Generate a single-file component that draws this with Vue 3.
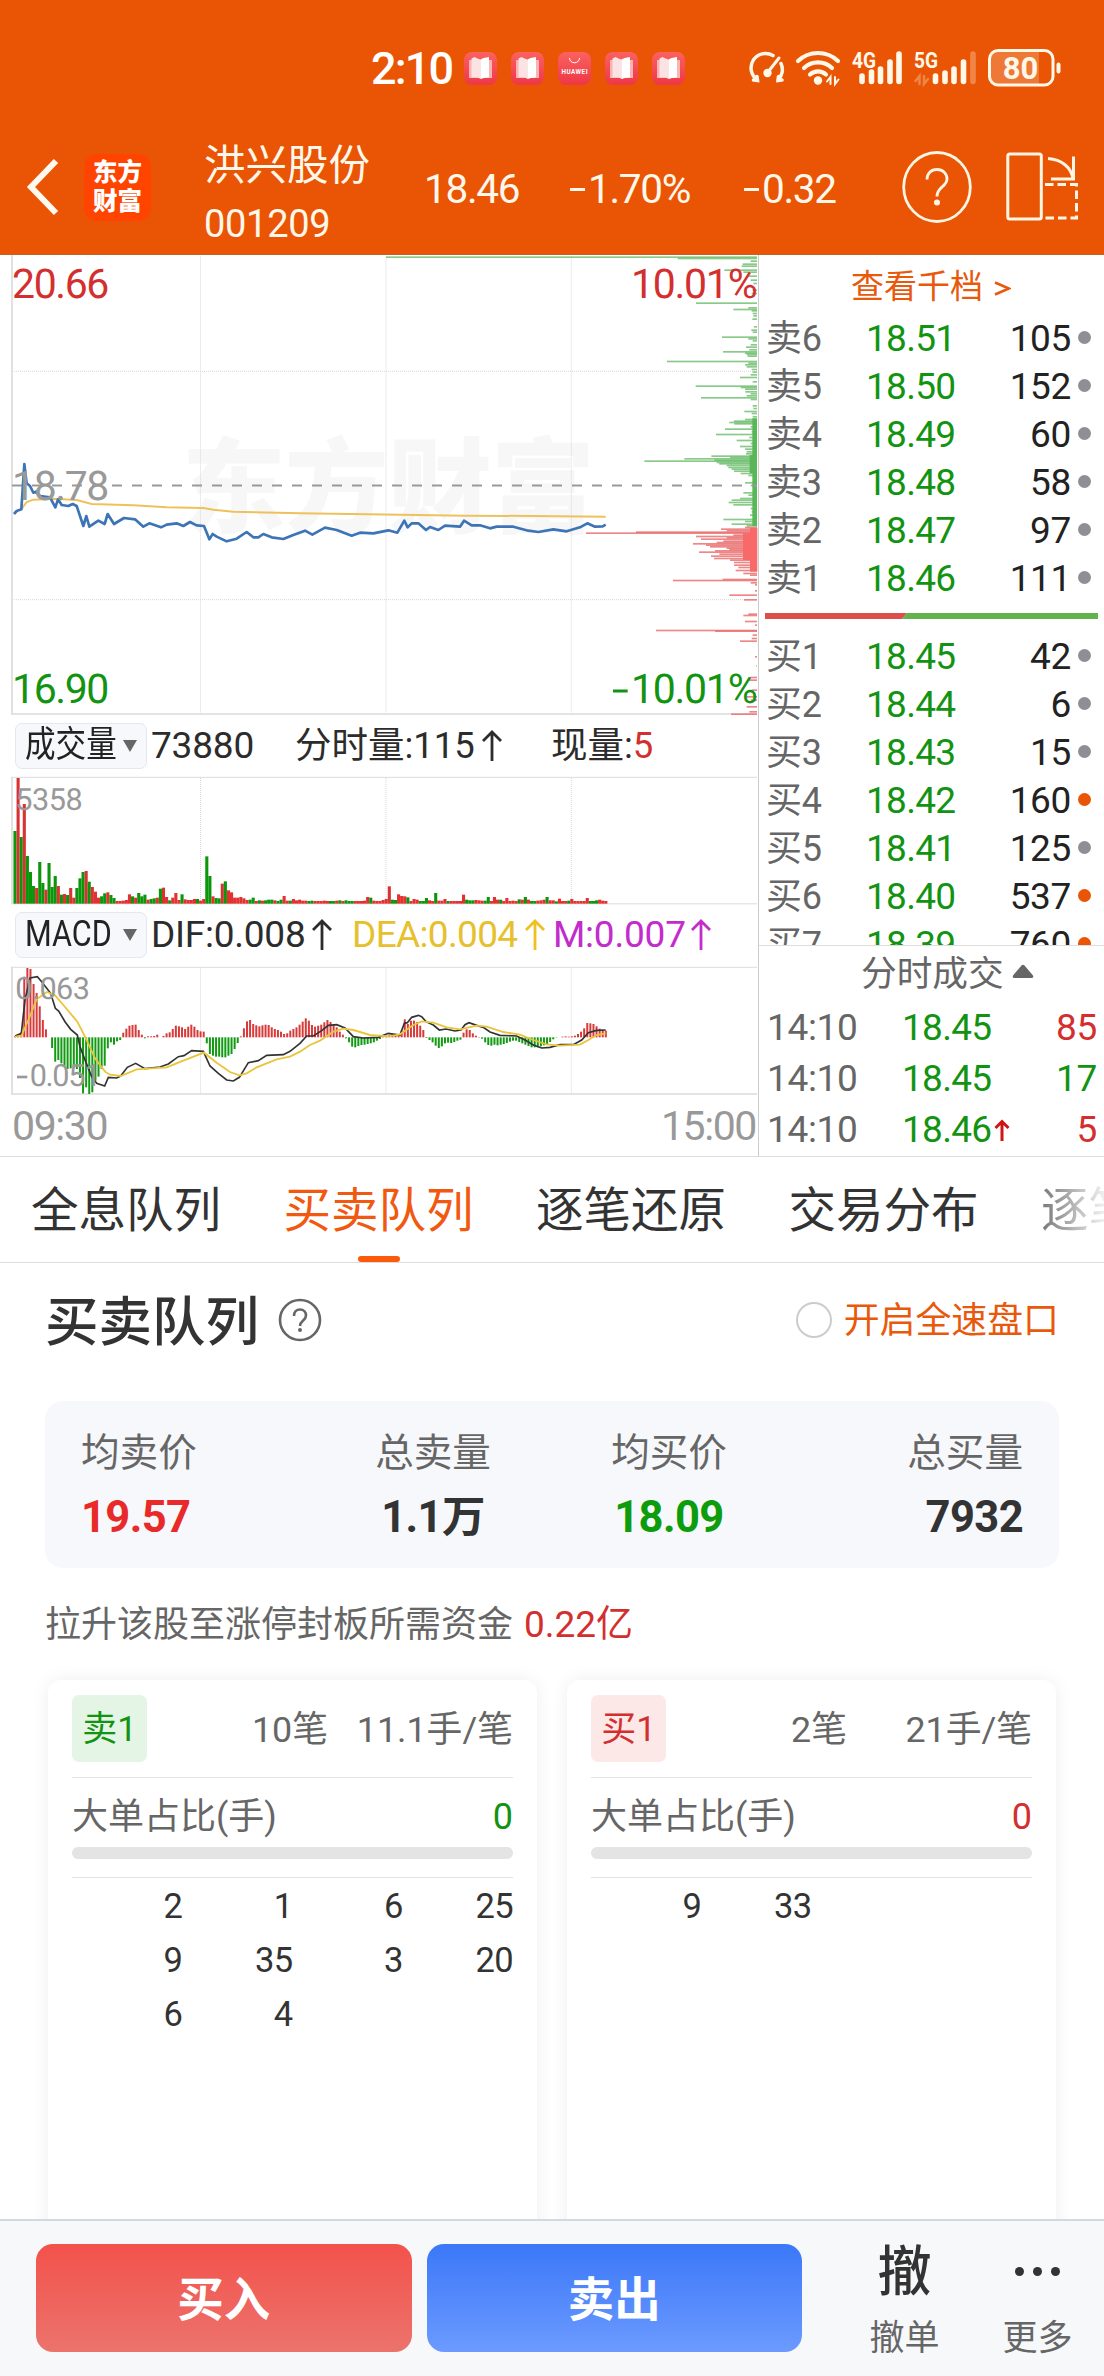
<script setup>
const series = (s) => s.trim().split(/\s+/)

const statusApps = ['book', 'book', 'huawei', 'book', 'book']

// Chart geometry is expressed in third-of-a-pixel units.
const PITCH = 9.28
const FIRST = 45

const priceLine = '42,792 50,783 64,778 73,642 80,700 90,708 100,728 108,725 120,738 150,742 166,772 174,748 185,765 205,768 218,762 230,768 250,828 259,798 268,830 295,812 314,822 323,792 342,822 372,804 405,808 430,830 448,820 483,832 500,824 530,820 550,828 570,816 590,826 612,828 628,868 638,852 650,860 680,874 710,866 740,846 760,862 775,862 790,852 815,862 850,867 880,855 915,842 937,854 975,833 1010,840 1055,857 1080,848 1120,850 1165,841 1192,848 1213,812 1223,832 1235,820 1255,820 1278,840 1290,831 1315,840 1335,827 1380,830 1392,812 1415,826 1440,826 1470,835 1490,830 1540,830 1585,842 1615,846 1660,838 1700,844 1740,832 1762,820 1785,830 1808,829 1817,824'
const averageLine = '64,778 80,756 100,749 160,746 230,750 275,762 400,766 500,772 610,774 640,779 700,785 900,790 1200,794 1400,797 1600,798 1817,800'

const depth = (s) => series(s).map((p) => {
  const [y, left] = p.split(':').map(Number)
  return { y: y - 2, x: 1140 + left, w: 1131 - left }
})
const askDepth = depth(`21:18 25:893 33:1112 42:1088 48:1085 60:1033 66:1090 78:1105 90:1112 100:1120 120:1118 130:1115 159:948 173:1105 178:1060 182:1115
190:1118 197:1120 207:1117 230:1122 240:1114 246:1118 261:1026 266:1105 272:1118 284:1112 291:1098 299:1108 305:1029 309:1095 313:1100 318:1103
334:861 339:1105 344:1095 350:1100 358:1115 366:1118 374:1112 382:1080 395:1118 408:947 412:1082 417:1095 425:1096 431:1112 437:1100 443:963 448:1112
467:1118 475:1120 484:1093 490:1115 500:1118 508:1095 513:1062 517:1048 521:1063 530:1112 537:1035 545:1115 553:1008 562:1108 571:1070 580:1112
589:1080 597:1095 605:1100 611:1098 618:994 622:1050 626:913 630:1003 633:793 637:1010 641:1018 646:1040 652:1045 657:1055 663:1062 670:1082 676:1105
698:1095 706:1112 715:1120 728:1090 735:1105 745:1080 750:1055 757:1046 764:1060 775:1112 785:1115 795:1110 808:1030 814:1095 822:1055 827:1100`)
const bidDepth = depth(`832:1095 837:1023 842:1040 846:768 849:618 855:1060 859:948 863:1040 867:963 873:1030 877:1010 881:939 885:978 890:990 894:1040 898:1048
902:1005 906:957 912:1018 918:993 925:1002 930:1050 937:1062 945:1062 952:1075 961:1067 970:1090 975:1110 988:1028 991:879 998:1112 1004:1125
1022:1125 1035:1048 1049:1092 1096:1090 1092:1105 1114:1095 1125:1125 1141:828 1143:1005 1155:1118 1165:1115 1173:1080 1220:1125 1247:1129
1282:1110 1290:1108 1320:1115 1340:1100 1350:1112 1370:1100 1385:1108 1392:1053`)

const volumes = series(`g218 r377 g200 r299 g143 g95 g53 r47 g125 g62 r42 g122 g50 g83 r53 g27 r29 g26 r47 r18 g47 g76 g95 r98 g66 r50 r36 r18 g22 g31
r34 g26 g17 r8 r8 r9 r11 r28 g22 r18 g32 g22 g27 r12 g14 g16 r18 g45 r48 r20 g10 r18 r32 r11 g28 r13 r11 r11 r14 g14
r9 r14 g142 g83 r22 g17 g16 r60 g67 r40 r34 r18 r18 r20 r16 r11 g12 g18 r8 g10 r9 g10 g12 g12 r10 g8 g12 r23 r9 g9
r14 r10 r12 r9 r9 g8 g9 r8 r8 r8 r9 r8 g8 g8 r9 g10 r8 g10 g8 g8 r8 r8 r8 r9 r20 g18 r9 r8 r8 r11
r14 r52 g12 g11 r28 r23 r22 g19 r8 r14 r12 g8 g8 g17 r10 r8 g32 r9 r9 r14 g8 r8 r8 r8 r8 r27 g12 g10 g10 r11
r10 r9 g9 g20 r8 r20 r12 g12 r8 r17 r8 r9 r8 g13 r12 g20 r12 g8 g8 r9 r10 r12 g20 r10 r10 g7 r15 r8 r8 g9
r14 r8 r8 r8 r8 r17 g8 g8 g10 r12 r9 r8`).map((v, i) => ({ up: v[0] === 'r', h: +v.slice(1), x: FIRST + i * PITCH }))

const macd = series(`3 5 15 182 208 205 160 133 93 52 24 0 -32 -73 -68 -78 -85 -95 -93 -92 -95 -122 -168 -150 -170 -165 -130 -118 -95 -85
-33 -15 -22 -12 -8 14 26 35 37 38 22 8 -3 3 3 4 8 0 4 12 15 25 35 33 30 25 32 38 32 22
18 17 -18 -50 -55 -58 -58 -60 -60 -55 -50 -35 -17 3 27 48 52 40 36 33 36 38 37 30 25 22 17 10 12 20
25 30 38 47 57 50 37 32 35 38 45 52 46 38 30 17 8 -3 -15 -28 -30 -26 -23 -22 -20 -18 -15 -10 -5 2
5 8 10 6 5 20 54 40 50 50 46 35 22 -2 -8 -15 -25 -32 -27 -18 -16 -17 -14 -10 -7 14 24 22 12 5
-1 -4 -15 -23 -25 -22 -24 -22 -20 -17 -13 -10 -10 -14 -18 -22 -26 -30 -30 -30 -27 -24 -20 -14 -6 -1 0 2 3 2
3 5 10 17 27 43 42 40 33 26 22 20`).map((v, i) => ({ v: +v, x: FIRST + i * PITCH }))
const difLine = '45,978 64,970 75,870 90,804 112,800 125,815 152,850 166,895 176,903 195,935 212,958 232,975 240,1010 255,1050 275,1100 290,1120 314,1128 325,1102 350,1104 362,1098 382,1072 407,1060 435,1076 480,1071 505,1062 535,1040 552,1037 575,1022 610,1024 630,1068 655,1090 680,1110 700,1113 718,1102 745,1058 775,1052 800,1036 850,1034 870,1024 900,1000 920,978 940,978 965,962 985,946 1010,944 1035,954 1060,980 1090,984 1135,982 1165,970 1200,975 1213,940 1222,938 1235,922 1255,916 1265,920 1278,935 1300,945 1318,960 1338,957 1365,963 1383,960 1395,944 1407,938 1430,946 1450,952 1470,966 1500,976 1550,978 1575,990 1600,1005 1625,1014 1650,1012 1680,1004 1720,1004 1745,990 1765,968 1790,961 1817,960'
const deaLine = '45,980 64,978 85,930 110,868 140,846 165,856 190,885 232,935 255,980 285,1045 315,1085 330,1094 362,1098 410,1078 500,1072 550,1052 612,1028 650,1058 690,1086 718,1096 740,1090 770,1072 830,1048 870,1040 900,1025 930,1005 960,992 1000,965 1030,956 1060,960 1110,975 1165,979 1200,973 1240,945 1265,934 1300,938 1340,952 1380,958 1430,947 1460,950 1510,966 1560,974 1600,990 1640,1003 1680,1007 1740,1004 1765,990 1790,975 1817,970'

const asks = [['卖6', '18.51', 105], ['卖5', '18.50', 152], ['卖4', '18.49', 60], ['卖3', '18.48', 58], ['卖2', '18.47', 97], ['卖1', '18.46', 111]]
const bids = [['买1', '18.45', 42], ['买2', '18.44', 6], ['买3', '18.43', 15], ['买4', '18.42', 160, true], ['买5', '18.41', 125], ['买6', '18.40', 537, true], ['买7', '18.39', 760, true]]
const trades = [
  { price: '18.45', qty: 85, up: true },
  { price: '18.45', qty: 17, up: false },
  { price: '18.46', qty: 5, up: true, arrow: true },
]
const tabs = ['全息队列', '买卖队列', '逐笔还原', '交易分布', '逐笔成交']
const stats = [
  { label: '均卖价', value: '19.57', tone: 'red' },
  { label: '总卖量', value: '1.1万', tone: '' },
  { label: '均买价', value: '18.09', tone: 'green' },
  { label: '总买量', value: '7932', tone: '' },
]
const queues = [
  { name: '卖1', tone: 'green', count: '10笔', avg: '11.1手/笔', items: [2, 1, 6, 25, 9, 35, 3, 20, 6, 4] },
  { name: '买1', tone: 'red', count: '2笔', avg: '21手/笔', items: [9, 33] },
]
</script>

<template>
  <div class="screen">
    <header class="top">
      <div class="status">
        <span class="clock">2:10</span>
        <div class="apps">
          <svg v-for="(a, i) in statusApps" :key="i" width="33" height="33" viewBox="0 0 33 33">
            <defs>
              <linearGradient :id="'app' + i" x1="0" y1="0" x2="0" y2="1">
                <stop offset="0" stop-color="#fb6260" /><stop offset="1" stop-color="#ee3745" />
              </linearGradient>
            </defs>
            <rect width="33" height="33" rx="8" :fill="`url(#app${i})`" />
            <template v-if="a === 'book'">
              <path d="M5 8h23v18H18l-1.500 1-1.500-1H5z" fill="#fbb3b5" />
              <path d="M7.500 6.500l3-1.500 3 1.500 3 1v19l-3-1h-6z" fill="#fbe3e4" />
              <path d="M16.500 7.500l3-1.500 5.500-1v20.500l-5 .5-3.500 1z" fill="#fff" />
            </template>
            <template v-else>
              <path d="M11.500 6a5 4.800 0 0 0 10 0" fill="none" stroke="#fff" stroke-width="1" />
              <text x="16.500" y="21.500" font-size="6.300" font-weight="700" fill="#fff" text-anchor="middle" textLength="26">HUAWEI</text>
            </template>
          </svg>
        </div>
        <svg class="signals" width="318" height="40" viewBox="746 48 318 40" fill="none" stroke="#fff8e8" stroke-linecap="round">
          <path d="M756.500 80a14.500 14.500 0 0 1 15.500-24.500M780 63.500a14.500 14.500 0 0 1-3 16.500M752.500 80l4 .5-.5-4M781 80l-4 .5.5-4" stroke-width="3.500" />
          <path d="M767 72L778 58" stroke-width="3" />
          <circle cx="766.500" cy="73" r="4.200" fill="#fff8e8" stroke="none" />
          <path d="M797 61a29 29 0 0 1 40 0M803 68a20.500 20.500 0 0 1 28 0M809 74.500a12 12 0 0 1 16 0" stroke-width="4.200" />
          <circle cx="817" cy="80.500" r="4.200" fill="#fff8e8" stroke="none" />
          <path d="M829.500 84v-7l-3.500 4.500M834 77v7l3.500-4.500" stroke-width="2" />
          <text x="851" y="68" class="net" textLength="24" lengthAdjust="spacingAndGlyphs">4G</text>
          <path d="M861 76v5.500M870.500 72v9.500M879.500 69v12.500M889 62v19.500M898 54v27.500" stroke-width="5.600" />
          <text x="913" y="68" class="net" textLength="24" lengthAdjust="spacingAndGlyphs">5G</text>
          <path d="M918.500 84v-8l-4 5M923 76v8l4-5" stroke-width="2.500" opacity=".3" />
          <path d="M934.500 76v5.500M944 73v8.500M953 69v12.500M962.500 62v19.500" stroke-width="5.600" />
          <path d="M972 54v27.500" stroke-width="5.600" opacity=".3" />
          <path d="M996 52h42v32h-42q-6 0-6-7V59q0-7 6-7z" fill="#fff8e8" opacity=".22" stroke="none" />
          <rect x="988.500" y="50.500" width="63.500" height="34.500" rx="8.500" stroke-width="3" />
          <path d="M1057.500 64.500v7" stroke-width="4" />
          <text x="1019.500" y="79" class="level" text-anchor="middle">80</text>
        </svg>
      </div>

      <div class="quote">
        <svg class="back" width="34" height="60" viewBox="0 0 34 60"><path d="M30 4L5 30l25 26" fill="none" stroke="#fffaf0" stroke-width="6" /></svg>
        <div class="logo"><span>东方</span><span>财富</span></div>
        <div class="stock">
          <div class="stock-name">洪兴股份</div>
          <div class="stock-code">001209</div>
        </div>
        <div class="figure last">18.46</div>
        <div class="figure pct"><i class="minus"></i>1.70%</div>
        <div class="figure diff"><i class="minus"></i>0.32</div>
        <svg class="help" width="70" height="72" viewBox="0 0 70 72" fill="none" stroke="#fff5e4" stroke-width="2.800">
          <ellipse cx="35" cy="36" rx="33.300" ry="34.500" />
          <path d="M25 28.500c0-6 4-10 10-10s10 4 10 9.500c0 8-10 7.500-10 17.500" />
          <circle cx="35" cy="51.500" r="3" fill="#fff5e4" stroke="none" />
        </svg>
        <svg class="rotate" width="74" height="70" viewBox="0 0 74 70" fill="none" stroke="#fff5e4" stroke-width="3">
          <rect x="1.800" y="2" width="33.500" height="65" rx="2" />
          <path d="M42 6.500c14 1 23 9 25 20M67.500 4.500v22.500H45" />
          <path d="M39 32.500h31.500V66H39" stroke-dasharray="8.500 4" />
        </svg>
      </div>
    </header>

    <section class="market">
      <div class="charts">
        <svg class="chart price" width="759" height="465" viewBox="0 15 2277 1395">
          <text class="mark" x="545" y="825" textLength="1240">东方财富</text>
          <g class="grid">
            <path d="M36 364H2271M36 1049H2271M601.500 20V1390M1158 20V1390M1714 20V1390" />
          </g>
          <path d="M36 15V1392M33 1392H2271" class="frame" />
          <rect v-for="(d, i) in askDepth" :key="'a' + i" :x="d.x" :y="d.y" :width="d.w" height="5" class="ask" />
          <rect v-for="(d, i) in bidDepth" :key="'b' + i" :x="d.x" :y="d.y" :width="d.w" height="5" class="bid" />
          <path d="M2264 505V828M2256 615V670" stroke="#58b858" stroke-width="14" />
          <path d="M2261 834V965M2240 850V930" stroke="#f86a6a" stroke-width="22" />
          <path d="M36 706.500H2271" stroke="#999" stroke-width="6" stroke-dasharray="30 30" />
          <polyline :points="averageLine" fill="none" stroke="#efc15c" stroke-width="6" />
          <polyline :points="priceLine" fill="none" stroke="#3d74b5" stroke-width="8" stroke-linejoin="round" />
          <text x="36" y="145" class="scale red" textLength="292">20.66</text>
          <text x="36" y="750" class="scale gray" textLength="292">18.78</text>
          <text x="36" y="1360" class="scale green" textLength="292">16.90</text>
          <text x="2273" y="145" class="scale red" text-anchor="end" textLength="380">10.01%</text>
          <text x="2273" y="1360" class="scale green" text-anchor="end" textLength="380">10.01%</text>
          <path d="M1839 1323h44" stroke="#129312" stroke-width="9" />
        </svg>

        <div class="legend">
          <button class="pick"><span>成交量</span><i></i></button>
          <span class="vol-total">73880</span>
          <span class="vol-minute">分时量:115</span>
          <svg class="arrow" width="20" height="31" viewBox="0 0 20 31"><path d="M10 31V2M1 11l9-9 9 9" /></svg>
          <span class="vol-now">现量:<b>5</b></span>
        </div>
        <svg class="chart" width="759" height="133" viewBox="0 195 2277 399">
          <path class="grid" d="M601.500 204V580M1158 204V580M1714 204V580" />
          <path d="M36 202V583" class="frame" />
          <path d="M33 202H2271M36 581.500H2271" class="frame thin" />
          <rect v-for="(v, i) in volumes" :key="i" :x="v.x - 4.600" :y="581 - v.h" width="9.300" :height="v.h" :fill="v.up ? (v.h > 40 ? '#d93232' : '#e33030') : '#0c960c'" />
          <text x="46" y="300" class="mini" textLength="202">5358</text>
        </svg>

        <div class="legend second">
          <button class="pick"><span>MACD</span><i></i></button>
          <span class="dif">DIF:0.008</span>
          <svg class="arrow a1" width="20" height="31" viewBox="0 0 20 31"><path d="M10 31V2M1 11l9-9 9 9" /></svg>
          <span class="dea">DEA:0.004</span>
          <svg class="arrow a2" width="20" height="31" viewBox="0 0 20 31"><path d="M10 31V2M1 11l9-9 9 9" /></svg>
          <span class="mm">M:0.007</span>
          <svg class="arrow a3" width="20" height="31" viewBox="0 0 20 31"><path d="M10 31V2M1 11l9-9 9 9" /></svg>
        </div>
        <svg class="chart" width="759" height="133" viewBox="0 765 2277 399">
          <path class="grid" d="M601.500 775V1150M1158 775V1150M1714 775V1150" />
          <path d="M36 770V1154M33 1152H2271" class="frame" />
          <path d="M33 772H2271" class="frame thin" />
          <rect v-for="(m, i) in macd" :key="i" :x="m.x - 3" :y="m.v > 0 ? 982 - m.v : 982" width="6" :height="Math.abs(m.v)" :fill="m.v > 0 ? '#d83a3a' : '#129a12'" />
          <polyline :points="difLine" fill="none" stroke="#333" stroke-width="5" />
          <polyline :points="deaLine" fill="none" stroke="#e9c53c" stroke-width="5.500" />
          <text x="46" y="868" class="mini" textLength="224">0.063</text>
          <text x="89" y="1127" class="mini" textLength="215">0.051</text>
          <path d="M51 1101h31" stroke="#999" stroke-width="8" />
        </svg>
        <div class="axis"><span>09:30</span><span>15:00</span></div>
      </div>

      <aside class="book">
        <div class="more-levels">查看千档 <svg width="17" height="15" viewBox="0 0 17 15"><path d="M1 1.500l14 6-14 6" fill="none" stroke="#e8590c" stroke-width="2.600" /></svg></div>
        <div class="levels asks">
          <div v-for="r in asks" :key="r[0]" class="level-row">
            <span class="side">{{ r[0] }}</span><span class="px">{{ r[1] }}</span><span class="qty">{{ r[2] }}</span><i class="dot"></i>
          </div>
        </div>
        <svg class="ratio" width="333" height="6" viewBox="0 0 333 6"><path d="M0 0h142l-5 6H0z" fill="#dc4e4c" /><path d="M142 0h191v6H137z" fill="#62b34e" /></svg>
        <div class="levels bids">
          <div v-for="r in bids" :key="r[0]" class="level-row">
            <span class="side">{{ r[0] }}</span><span class="px">{{ r[1] }}</span><span class="qty">{{ r[2] }}</span><i class="dot" :class="{ hot: r[3] }"></i>
          </div>
        </div>
        <div class="trade-head">分时成交<svg width="22" height="15" viewBox="0 0 22 15"><path d="M9.500 1.500q1.500-1.500 3 0L21 11.500q1 2.500-1.500 2.500h-17Q0 14 1 11.500z" fill="#666" /></svg></div>
        <div v-for="(t, i) in trades" :key="i" class="trade">
          <span class="time">14:10</span><span class="px">{{ t.price }}</span>
          <span class="tick"><svg v-if="t.arrow" width="16" height="23" viewBox="0 0 16 23"><path d="M8 22V3M1.500 9L8 2.500 14.500 9" fill="none" stroke="#d01414" stroke-width="3" /></svg></span>
          <span class="qty" :class="t.up ? 'red' : 'green'">{{ t.qty }}</span>
        </div>
      </aside>
    </section>

    <nav class="tabs">
      <span v-for="(t, i) in tabs" :key="i" class="tab" :class="{ active: i === 1 }">{{ t }}</span>
    </nav>

    <main class="panel">
      <div class="panel-head">
        <h2>买卖队列</h2>
        <svg width="44" height="44" viewBox="0 0 44 44" fill="none" stroke="#666" stroke-width="2.600">
          <circle cx="22" cy="22" r="20" />
          <path d="M16 18c0-4 2.500-6.500 6-6.500s6 2.500 6 6c0 5-6 5-6 10.500" /><circle cx="22" cy="32" r="2" fill="#666" stroke="none" />
        </svg>
        <span class="radio"></span>
        <span class="turbo">开启全速盘口</span>
      </div>

      <div class="stats">
        <div v-for="s in stats" :key="s.label" class="stat">
          <div class="stat-label">{{ s.label }}</div>
          <div class="stat-value" :class="s.tone">{{ s.value }}</div>
        </div>
      </div>

      <p class="funds">拉升该股至涨停封板所需资金 <em>0.22亿</em></p>

      <div class="cards">
        <article v-for="q in queues" :key="q.name" class="card">
          <div class="card-head">
            <span class="badge" :class="q.tone">{{ q.name }}</span>
            <span class="count">{{ q.count }}</span>
            <span class="avg">{{ q.avg }}</span>
          </div>
          <div class="big">
            <div class="big-row"><span>大单占比(手)</span><span :class="q.tone">0</span></div>
            <div class="track"></div>
          </div>
          <div class="items"><span v-for="(n, i) in q.items" :key="i">{{ n }}</span></div>
        </article>
      </div>
    </main>

    <footer class="actions">
      <button class="buy">买入</button>
      <button class="sell">卖出</button>
      <div class="tool cancel"><span class="glyph">撤</span><span>撤单</span></div>
      <div class="tool"><span class="glyph dots"><i></i><i></i><i></i></span><span>更多</span></div>
    </footer>
  </div>
</template>

<style>
body { margin: 0; background: #fff; }
</style>

<style scoped>
* { box-sizing: border-box; }
.screen {
  width: 1104px; height: 2376px; overflow: hidden; display: flex; flex-direction: column; line-height: 1.2;
  background: #fff; color: #333; font-family: Roboto, "Noto Sans CJK SC", sans-serif; white-space: nowrap;
}
button { border: 0; padding: 0; font-family: inherit; }
svg { display: block; flex: none; }
.red { color: #d32f2f; fill: #d32f2f; }
.green { color: #129312; fill: #129312; }
.gray { fill: #999; }

.top { height: 255px; background: #e95504; color: #fff8ea; flex: none; border-bottom: 1px solid #c4602a; }
.status { height: 118px; padding: 50px 0 0 371px; display: flex; align-items: flex-start; }
.clock { width: 93px; font-size: 45px; font-weight: 500; line-height: 37px; letter-spacing: -1.8px; color: #fff; }
.apps { display: flex; gap: 14px; padding-top: 2px; }
.signals { margin: -2px 0 0 62px; }
.net { font-size: 22px; font-weight: 700; fill: #fff8e8; stroke: none; }
.level { font-size: 31px; font-weight: 700; fill: #fff8e8; stroke: none; }

.quote { display: flex; align-items: center; height: 138px; padding-left: 26px; }
.logo {
  width: 67px; height: 67px; margin-left: 24px; border-radius: 13px; background: #ff4400; color: #fff;
  display: flex; flex-direction: column; align-items: center; justify-content: center;
  font-size: 24.500px; line-height: 29px; font-weight: 900;
}
.stock { width: 220px; margin-left: 53px; padding-top: 17px; }
.stock-name { font-size: 41.500px; line-height: 56px; }
.stock-code { font-size: 38px; line-height: 60px; letter-spacing: -.3px; }
.figure { font-size: 40.500px; letter-spacing: -1.300px; line-height: 50px; padding-top: 4px; display: flex; align-items: center; }
.last { width: 146px; }
.pct { width: 174px; }
.diff { width: 158px; }
.minus { width: 15px; height: 3px; margin-right: 3px; background: currentColor; }
.rotate { margin-left: 34px; }

.market { display: flex; height: 902px; flex: none; border-bottom: 1px solid #ddd; }
.charts { width: 759px; border-right: 1px solid #ccc; overflow: hidden; }
.chart { text-rendering: geometricPrecision; }
.mark { font-size: 312px; font-weight: 900; fill: #f7f7f8; }
.grid { fill: none; stroke: #d8d8d8; stroke-width: 3; stroke-dasharray: 3 3; }
.frame { fill: none; stroke: #dcdcdc; stroke-width: 5; }
.frame.thin { stroke-width: 3; }
.ask { fill: #62b862; opacity: .75; }
.bid { fill: #ea6a6a; opacity: .8; }
.scale { font-size: 123px; }
.mini { font-size: 92px; fill: #999; }
.legend { height: 55px; padding: 0 0 0 15px; display: flex; align-items: center; font-size: 37px; color: #2c2c2c; line-height: 46px; }
.legend.second { height: 57px; }
.pick {
  position: relative; width: 132px; height: 46px; margin-top: -4px; padding-left: 9px; border: 1px solid #e4e7ee; border-radius: 7px;
  background: #f6f8fb; display: flex; align-items: center; font-size: 36px; line-height: 44px; color: #222; flex: none;
}
.legend .pick span { margin-top: -1px; width: 98px; flex: none; text-align: left; transform: scaleX(.85); transform-origin: left center; }
.pick i { border: 7.500px solid transparent; border-top: 12px solid #666; border-bottom: 0; }
.legend span, .legend .arrow { margin-top: -4px; }
.arrow { fill: none; stroke: #2c2c2c; stroke-width: 2.800; }
.vol-total { width: 144px; margin-left: 4px; letter-spacing: -.2px; }
.vol-minute { width: 184px; font-size: 36.500px; }
.legend .vol-minute + .arrow { margin-left: 3px; }
.vol-now { margin-left: 49px; font-size: 36.500px; }
.vol-now b { font-weight: 400; color: #d32f2f; }
.dif { width: 161px; margin-left: 4px; letter-spacing: -.25px; }
.dea { width: 173px; margin-left: 20px; color: #e6c02e; letter-spacing: -.65px; }
.a2 { stroke: #f0c020; }
.mm { width: 138px; margin-left: 8px; color: #c22ccb; letter-spacing: -.2px; }
.a3 { stroke: #c22ccb; }
.axis { display: flex; justify-content: space-between; padding: 3px 2px 0 12px; font-size: 41px; line-height: 50px; color: #999; letter-spacing: -1.4px; }

.book { flex: 1; display: flex; flex-direction: column; font-size: 37px; }
.more-levels { height: 60px; padding-top: 4px; display: flex; align-items: center; padding-left: 92px; font-size: 33px; color: #e8590c; flex: none; }
.more-levels svg { margin: 2px 0 0 11px; }
.asks { height: 298px; flex: none; }
.level-row { display: flex; align-items: center; height: 48px; padding-left: 7px; letter-spacing: -.35px; }
.bids { height: 313px; margin-top: 14px; overflow: hidden; border-bottom: 1px solid #ddd; flex: none; }
.side { width: 100px; font-size: 36px; color: #666; padding-top: 2px; }
.px { width: 92px; color: #129312; letter-spacing: -.7px; }
.qty { width: 113px; text-align: right; color: #222; }
.dot { width: 13px; height: 13px; margin: -3px 0 0 7px; border-radius: 50%; background: #8f8e94; }
.dot.hot { background: #e95504; }
.ratio { margin-left: 6px; }
.trade-head { height: 57px; display: flex; align-items: center; padding-left: 102px; font-size: 35.700px; color: #666; flex: none; }
.trade-head svg { margin: -6px 0 0 8px; }
.trade { height: 51px; display: flex; align-items: center; padding-left: 8px; letter-spacing: -.35px; flex: none; }
.time { width: 135px; color: #666; }
.tick { width: 20px; }
.trade .qty { width: 83px; }
.trade .qty.red { color: #d32f2f; }
.trade .qty.green { color: #129312; }

.tabs {
  height: 106px; flex: none; padding-left: 31px; display: flex; gap: 62.500px; border-bottom: 1px solid #ddd; font-size: 47.500px; line-height: 108px;
  overflow: hidden;
}
.tab { position: relative; flex: none; height: 105px; }
.tab:last-child { background: linear-gradient(90deg, #777 0, #eee 62px); -webkit-background-clip: text; background-clip: text; color: transparent; }
.tab.active { color: #f0590f; }
.tab.active::after { content: ""; position: absolute; left: 74px; bottom: 0; width: 42px; height: 6px; border-radius: 3px; background: #fb5a0c; }

.panel { height: 956px; flex: none; overflow: hidden; }
.panel-head { height: 138px; padding: 0 45px 24px 45px; display: flex; align-items: center; }
h2 { margin: 0; width: 233px; padding-top: 5px; font-size: 53.500px; font-weight: 500; line-height: 60px; }
.radio { width: 36px; height: 36px; margin-left: 474px; border: 2px solid #ccc; border-radius: 50%; }
.turbo { margin-left: 12px; padding-top: 4px; font-size: 35.900px; color: #e8590c; }
.stats { height: 167px; margin: 0 45px; padding: 29px 36px 0; border-radius: 18px; background: #f7f8fb; display: flex; justify-content: space-between; }
.stat { text-align: center; width: 116px; }
.stat:nth-child(2) { margin-left: 58px; }
.stat:first-child { text-align: left; }
.stat:last-child { text-align: right; margin-left: 60px; }
.stat-label { font-size: 38.600px; line-height: 46px; color: #666; }
.stat-value { margin-top: 19px; font-size: 43.500px; line-height: 46px; font-weight: 700; letter-spacing: -.6px; }
.stat-value.red { color: #e92a2a; }
.stat-value.green { color: #0c9c0c; }
.funds { margin: 36px 0 0 45px; font-size: 36px; line-height: 42px; color: #666; }
.funds em { margin-left: 2px; font-style: normal; font-size: 37px; color: #d32f2f; }
.cards { display: flex; gap: 30px; padding: 34px 48px 0; }
.card { width: 489px; height: 600px; padding: 15px 24px 0; border-radius: 13px; background: #fff; box-shadow: 0 0 18px rgba(0, 0, 0, .07); }
.card-head { height: 83px; border-bottom: 1px solid #e2e2e2; display: flex; font-size: 35.800px; line-height: 70px; color: #666; }
.badge { width: 75px; height: 67px; border-radius: 7px; text-align: center; font-size: 35px; }
.badge.green { background: #e5f5e5; }
.badge.red { background: #fde8e8; }
.count { width: 181px; text-align: right; }
.avg { flex: 1; text-align: right; }
.big { height: 100px; padding-top: 15px; border-bottom: 1px solid #e2e2e2; }
.big-row { display: flex; justify-content: space-between; font-size: 36px; line-height: 48px; height: 46px; color: #666; }
.big-row .red { color: #d32f2f; }
.big-row .green { color: #129312; }
.track { height: 12px; margin-top: 8px; border-radius: 6px; background: #e4e4e4; }
.items { display: grid; grid-template-columns: repeat(4, 1fr); padding-top: 1px; font-size: 34.500px; line-height: 54px; text-align: right; letter-spacing: -.6px; color: #333; }

.actions { flex: 1; border-top: 2px solid #d5d9dc; background: #f7f8fa; display: flex; padding: 23px 0 0 36px; }
.actions button { width: 375.500px; height: 108px; margin-right: 15px; padding-top: 3px; border-radius: 17px; color: #fff; font-size: 46.500px; line-height: 54px; font-weight: 700; }
.buy { background: linear-gradient(#f3524b, #ec736d); }
.sell { background: linear-gradient(#3b78f8, #6c9aff); }
.tool { width: 133px; padding-top: 2px; display: flex; flex-direction: column; align-items: center; font-size: 35px; line-height: 40px; color: #666; }
.cancel { margin-left: 21px; }
.tool .glyph { height: 54px; margin-bottom: 19px; font-size: 54px; line-height: 54px; font-weight: 500; color: #333; display: flex; align-items: center; gap: 9px; }
.tool .dots { padding-bottom: 4px; }
.glyph i { width: 9px; height: 9px; border-radius: 50%; background: #333; }
</style>
